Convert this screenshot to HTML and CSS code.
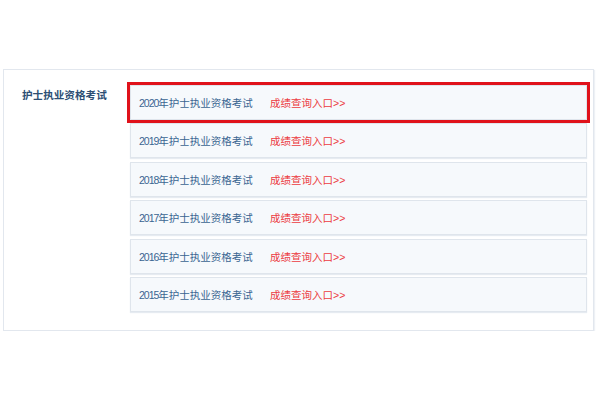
FILE: index.html
```html
<!DOCTYPE html>
<html lang="zh-CN">
<head>
<meta charset="utf-8">
<link rel="stylesheet" href="styles.css">
</head>
<body>
<div class="panel">
  <div class="title">护士执业资格考试</div>
  <ul class="list">
    <li class="row current"><span class="name"><span class="year">2020</span>年护士执业资格考试</span><span class="link">成绩查询入口&gt;&gt;</span></li>
    <li class="row"><span class="name"><span class="year">2019</span>年护士执业资格考试</span><span class="link">成绩查询入口&gt;&gt;</span></li>
    <li class="row"><span class="name"><span class="year">2018</span>年护士执业资格考试</span><span class="link">成绩查询入口&gt;&gt;</span></li>
    <li class="row"><span class="name"><span class="year">2017</span>年护士执业资格考试</span><span class="link">成绩查询入口&gt;&gt;</span></li>
    <li class="row"><span class="name"><span class="year">2016</span>年护士执业资格考试</span><span class="link">成绩查询入口&gt;&gt;</span></li>
    <li class="row"><span class="name"><span class="year">2015</span>年护士执业资格考试</span><span class="link">成绩查询入口&gt;&gt;</span></li>
  </ul>
</div>
</body>
</html>
```
FILE: styles.css
```css
html, body {
  margin: 0;
  padding: 0;
  background: #ffffff;
}
body {
  font-family: "Liberation Sans", "Noto Sans CJK SC", sans-serif;
  padding: 69px 6px 0 3px;
}
.panel {
  display: flex;
  border: 1px solid #e2e7ee;
  box-shadow: 1px 1px 1px #eef1f5;
  padding: 15px 6px 17px 0;
  height: 228px;
  background: #fff;
}
.title {
  width: 126px;
  flex: none;
  box-sizing: border-box;
  padding-left: 18px;
  font-size: 10.6px;
  line-height: 20px;
  font-weight: bold;
  color: #2c4f74;
}
.list {
  list-style: none;
  margin: 0;
  padding: 0;
  flex: 1;
  display: flex;
  flex-direction: column;
  gap: 3.4px;
}
.row {
  height: 33px;
  display: flex;
  align-items: center;
  border: 1px solid #dfe5ec;
  box-shadow: 0 1px 1px #e6ebf1;
  background: #f6f9fc;
  padding-left: 8px;
  font-size: 10.5px;
}
.row.current {
  outline: 3px solid #e0121b;
}
.name {
  color: #3a6592;
  width: 131px;
}
.year {
  letter-spacing: -1px;
}
.link {
  color: #ec3b41;
}
```
